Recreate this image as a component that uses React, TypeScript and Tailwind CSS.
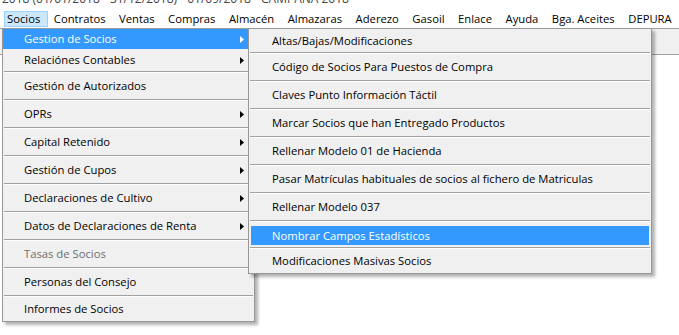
import React from "react";

type Item = {
  label: string;
  row: string;
  arrow?: boolean;
  active?: boolean;
  disabled?: boolean;
  sep?: boolean;
};

const bar = [
  "Socios",
  "Contratos",
  "Ventas",
  "Compras",
  "Almacén",
  "Almazaras",
  "Aderezo",
  "Gasoil",
  "Enlace",
  "Ayuda",
  "Bga. Aceites",
  "DEPURA",
];

const mainItems: Item[] = [
  { label: "Gestion de Socios", row: "h-[20px]", arrow: true, active: true },
  { label: "Relaciónes Contables", row: "h-[22px]", arrow: true, sep: true },
  { label: "Gestión de Autorizados", row: "h-[26px]", sep: true },
  { label: "OPRs", row: "h-[26px]", arrow: true, sep: true },
  { label: "Capital Retenido", row: "h-[26px]", arrow: true, sep: true },
  { label: "Gestión de Cupos", row: "h-[26px]", arrow: true, sep: true },
  { label: "Declaraciones de Cultivo", row: "h-[26px]", arrow: true, sep: true },
  { label: "Datos de Declaraciones de Renta", row: "h-[26px]", arrow: true, sep: true },
  { label: "Tasas de Socios", row: "h-[26px]", disabled: true, sep: true },
  { label: "Personas del Consejo", row: "h-[26px]", sep: true },
  { label: "Informes de Socios", row: "h-[24px]" },
];

const subItems: Item[] = [
  { label: "Altas/Bajas/Modificaciones", row: "h-[23px]", sep: true },
  { label: "Código de Socios Para Puestos de Compra", row: "h-[26px]", sep: true },
  { label: "Claves Punto Información Táctil", row: "h-[26px]", sep: true },
  { label: "Marcar Socios que han Entregado Productos", row: "h-[26px]", sep: true },
  { label: "Rellenar Modelo 01 de Hacienda", row: "h-[26px]", sep: true },
  { label: "Pasar Matrículas habituales de socios al fichero de Matriculas", row: "h-[26px]", sep: true },
  { label: "Rellenar Modelo 037", row: "h-[26px]", sep: true },
  { label: "Nombrar Campos Estadísticos", row: "h-[25px]", active: true, sep: true },
  { label: "Modificaciones Masivas Socios", row: "h-[24px]" },
];

function Arrow({ light }: { light?: boolean }) {
  return (
    <svg width="4" height="7" viewBox="0 0 4 7" className="shrink-0">
      <polygon points="0,0 4,3.5 0,7" fill={light ? "#ffffff" : "#000000"} />
    </svg>
  );
}

function Separator() {
  return (
    <div className="mx-[1px]">
      <div className="h-px bg-[#a0a0a0]" />
      <div className="h-px bg-white" />
    </div>
  );
}

function MainRow({ item }: { item: Item }) {
  return (
    <>
      <div
        className={`${item.row} flex items-center pl-[21px] pr-[10px] ${
          item.active ? "bg-[#3399ff] text-white" : item.disabled ? "text-[#6d6d6d]" : "text-black"
        }`}
      >
        <span className="flex-1">{item.label}</span>
        {item.arrow && <Arrow light={item.active} />}
      </div>
      {item.sep && <Separator />}
    </>
  );
}

function SubRow({ item }: { item: Item }) {
  return (
    <>
      <div className={`${item.row} flex flex-col`}>
        {item.active ? (
          <div className="mx-[2px] mt-[4px] flex h-[19px] items-center bg-[#3399ff] pl-[21px] text-white">
            {item.label}
          </div>
        ) : (
          <div className="flex flex-1 items-center pl-[23px] text-black">{item.label}</div>
        )}
      </div>
      {item.sep && <Separator />}
    </>
  );
}

export default function App() {
  return (
    <div
      className="relative h-[335px] w-[679px] overflow-hidden bg-white text-[11.25px] leading-none"
      style={{ fontFamily: '"Open Sans", "Noto Sans", sans-serif' }}
    >
      <div className="h-[10px] overflow-hidden">
        <div className="-mt-[7px] whitespace-nowrap pl-[2px] text-[12px] text-[#444]">
          2018 (01/01/2018 - 31/12/2018) - 01/09/2018 - CAMPAÑA 2018
        </div>
      </div>

      <div className="flex h-[18px] items-start gap-[2.5px] whitespace-nowrap pl-[4px]">
        {bar.map((b, i) => (
          <div
            key={b}
            className={`mt-[1px] flex h-[16px] shrink-0 items-center border pl-[2px] pr-[7px] text-black ${
              i === 0 ? "border-[#99d1ff] bg-[#cce8ff]" : "border-transparent"
            }`}
          >
            {b}
          </div>
        ))}
      </div>

      <div className="h-[27px] border-y border-[#a0a0a0] bg-[#f0f0f0]" />

      <div className="absolute left-[2px] top-[28px] w-[253px] border border-[#979797] bg-[#f0f0f0] shadow-[3px_3px_3px_rgba(0,0,0,0.3)]">
        {mainItems.map((it) => (
          <MainRow key={it.label} item={it} />
        ))}
      </div>

      <div className="absolute left-[248px] top-[28px] w-[404px] border border-[#979797] bg-[#f0f0f0] shadow-[3px_3px_3px_rgba(0,0,0,0.3)]">
        {subItems.map((it) => (
          <SubRow key={it.label} item={it} />
        ))}
      </div>
    </div>
  );
}
